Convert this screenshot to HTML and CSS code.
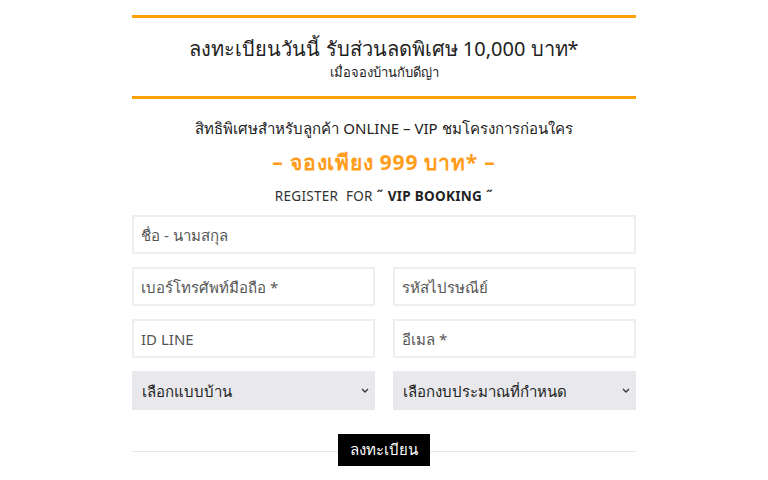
FILE: index.html
```html
<!DOCTYPE html>
<html lang="th">
<head>
  <meta charset="UTF-8">
  <meta name="viewport" content="width=device-width, initial-scale=1.0">
  <title>ลงทะเบียน VIP BOOKING</title>
  <link rel="stylesheet" href="styles.css">
</head>
<body>
  <div class="register-box">
    <div class="promo">
      <h2>ลงทะเบียนวันนี้ รับส่วนลดพิเศษ 10,000 บาท*</h2>
      <p>เมื่อจองบ้านกับดีญ่า</p>
    </div>

    <p class="privilege">สิทธิพิเศษสำหรับลูกค้า ONLINE – VIP ชมโครงการก่อนใคร</p>
    <p class="price">– จองเพียง 999 บาท* –</p>
    <p class="register-for">REGISTER&nbsp; FOR <b>˝ VIP BOOKING ˝</b></p>

    <form class="form">
      <input class="field full" type="text" placeholder="ชื่อ - นามสกุล">
      <input class="field" type="text" placeholder="เบอร์โทรศัพท์มือถือ *">
      <input class="field" type="text" placeholder="รหัสไปรษณีย์">
      <input class="field" type="text" placeholder="ID LINE">
      <input class="field" type="text" placeholder="อีเมล *">
      <select class="field select">
        <option>เลือกแบบบ้าน</option>
      </select>
      <select class="field select">
        <option>เลือกงบประมาณที่กำหนด</option>
      </select>
      <div class="submit-row full">
        <button type="button" class="btn">ลงทะเบียน</button>
      </div>
    </form>
  </div>
</body>
</html>
```
FILE: styles.css
```css
body {
  margin: 0;
  background: #fff;
  font-family: "Noto Sans", "Liberation Sans", sans-serif;
  color: #222;
}
.register-box {
  width: 504px;
  margin: 0 auto;
  padding-top: 15px;
  text-align: center;
}
.promo {
  border-top: 3px solid #ffa200;
  border-bottom: 3px solid #ffa200;
  padding: 17px 0 15px;
}
.promo h2 {
  margin: 0;
  font-size: 20px;
  font-weight: 400;
  line-height: 28px;
}
.promo p {
  margin: 0;
  font-size: 13px;
  line-height: 18px;
}
.privilege {
  margin: 17px 0 0;
  font-size: 15px;
  line-height: 24px;
}
.price {
  margin: 8px 0 0;
  font-size: 21px;
  font-weight: 700;
  letter-spacing: 0.8px;
  color: #ff9c1a;
  line-height: 28px;
}
.register-for {
  margin: 10px 0 0;
  font-size: 13.5px;
  letter-spacing: 0.3px;
  line-height: 20px;
  color: #333;
}
.register-for b {
  color: #222;
}
.form {
  margin-top: 9px;
  display: grid;
  grid-template-columns: 1fr 1fr;
  column-gap: 18px;
  row-gap: 13px;
}
.full {
  grid-column: 1 / 3;
}
.field {
  height: 39px;
  box-sizing: border-box;
  border: 2px solid #eee;
  padding: 0 7px;
  font-family: inherit;
  font-size: 15px;
  color: #444;
  background: #fff;
  outline: none;
}
.field::placeholder {
  color: #555;
}
.select {
  appearance: none;
  background: #e9e9ed url("data:image/svg+xml,%3Csvg xmlns='http://www.w3.org/2000/svg' width='8' height='5'%3E%3Cpath d='M1 1l3 3 3-3' fill='none' stroke='%23333' stroke-width='1.3'/%3E%3C/svg%3E") no-repeat right 6px center;
  border: none;
  padding: 0 10px;
  color: #222;
  font-weight: 500;
}
.submit-row {
  margin-top: 11px;
  position: relative;
  height: 32px;
}
.submit-row::before {
  content: "";
  position: absolute;
  left: 0;
  right: 0;
  top: 17px;
  border-top: 1px solid #e6e6e6;
}
.btn {
  position: relative;
  height: 32px;
  padding: 0 12px;
  background: #000;
  color: #fff;
  border: none;
  font-family: inherit;
  font-size: 15px;
  cursor: pointer;
}
```
